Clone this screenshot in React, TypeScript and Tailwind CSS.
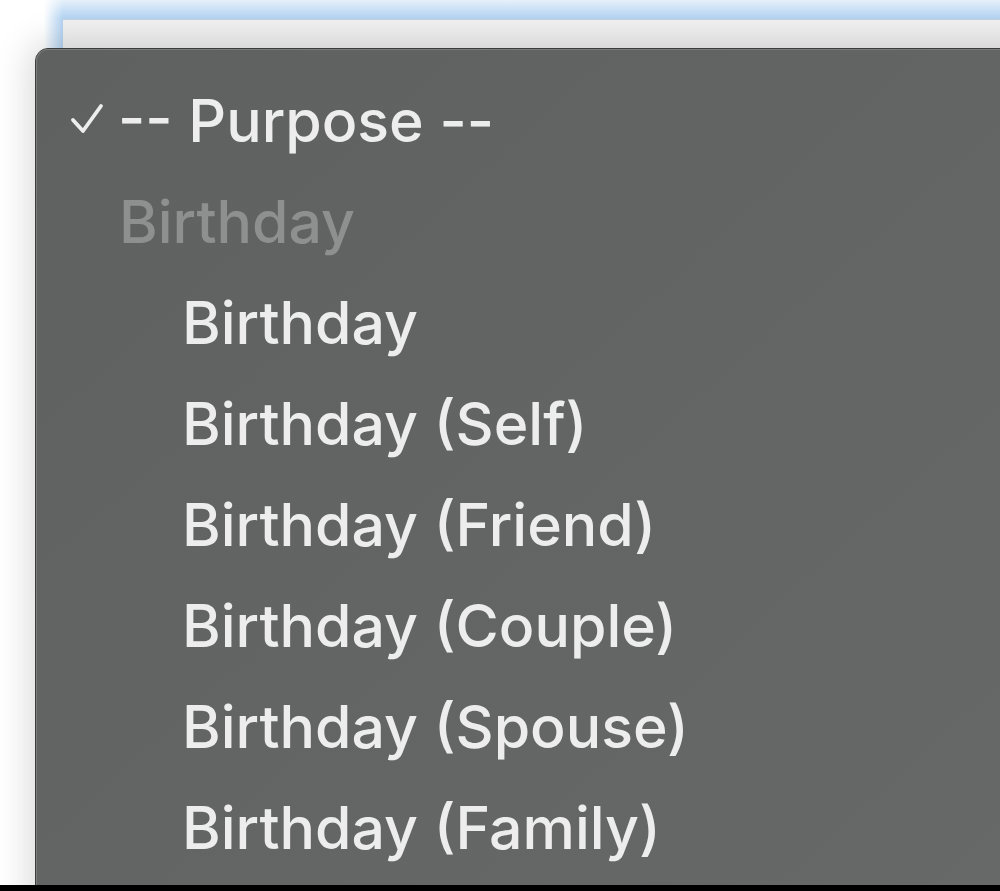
import React from "react";

const options = [
  "Birthday",
  "Birthday (Self)",
  "Birthday (Friend)",
  "Birthday (Couple)",
  "Birthday (Spouse)",
  "Birthday (Family)",
];

export default function App() {
  return (
    <div className="w-[1000px] h-[891px] flex flex-col bg-black overflow-hidden" style={{ fontFamily: "Inter, 'Noto Sans', sans-serif" }}>
      <div className="relative h-[885px] bg-white overflow-hidden">
        {/* focused select field with focus glow */}
        <div className="ml-[44px] pt-[19px] pl-[19px] bg-[linear-gradient(to_right,#ffffff,rgba(255,255,255,0)_19px),linear-gradient(to_bottom,#e6f0fa,#c9e0f6_10px,#b4d4f2_18px,#b4d4f2)]">
          <div className="h-[40px] bg-[#f1f1f1] border-t border-[#c6d3e2]" />
        </div>
        {/* popup menu */}
        <div className="absolute left-[35px] top-[48px] w-[1000px] h-[900px] rounded-tl-[13px] bg-[#636565] border border-[#3b3c3c] shadow-[0_0_34px_6px_rgba(0,0,0,0.15)]">
          <div className="h-full w-full rounded-tl-[12px] border-t border-l border-[#7b7d7d] bg-gradient-to-br from-[#5f6161] via-[#636565] to-[#676868] pt-[20px] font-medium">
            <div className="flex items-center h-[101px] leading-[101px] text-[59px] text-[#ededed]">
              <svg className="ml-[33px] mr-[14px]" width="34" height="36" viewBox="0 0 34 36" fill="none">
                <path d="M3 17 L13 28 L31 3" stroke="#ededed" strokeWidth="3.8" strokeLinecap="round" strokeLinejoin="round" />
              </svg>
              <span>-- Purpose --</span>
            </div>
            <div className="h-[101px] leading-[101px] text-[59px] text-[#8e9090] pl-[82px]">Birthday</div>
            {options.map((o) => (
              <div key={o} className="h-[101px] leading-[101px] text-[59px] text-[#ededed] pl-[145px]">
                {o}
              </div>
            ))}
          </div>
        </div>
      </div>
      <div className="h-[6px] bg-black" />
    </div>
  );
}
